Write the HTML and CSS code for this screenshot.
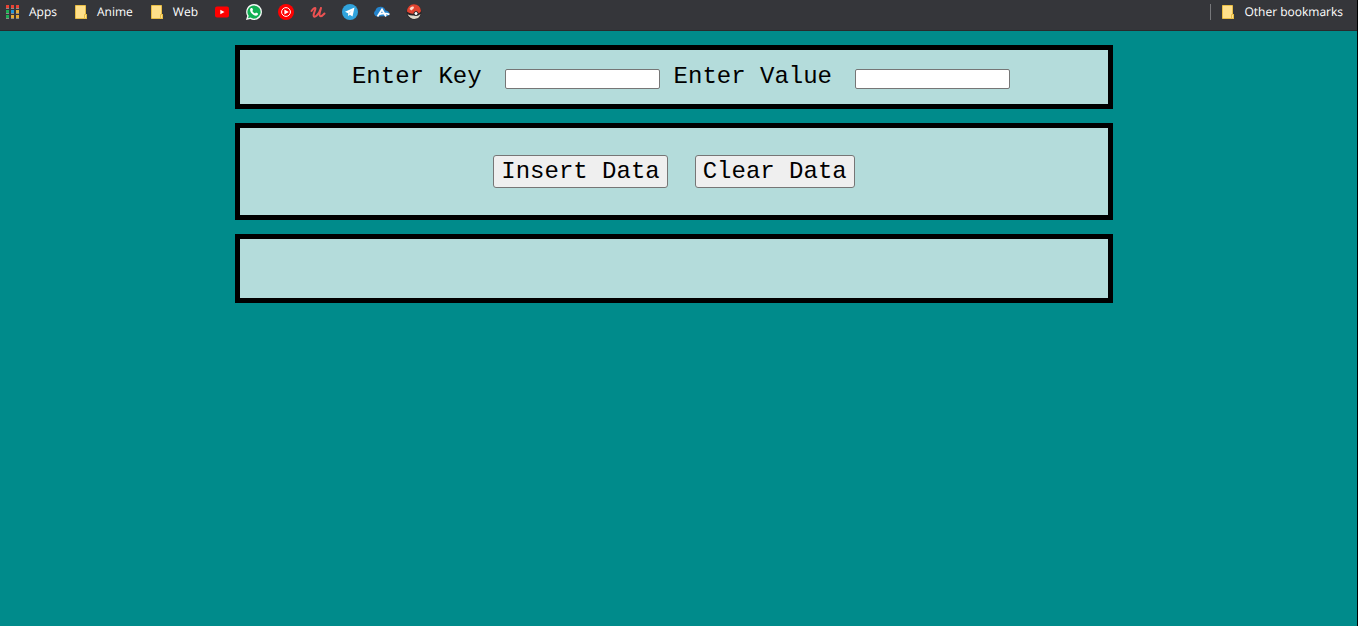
FILE: index.html
```html
<!DOCTYPE html>
<html lang="en">
<head>
<meta charset="utf-8">
<title>Local Storage</title>
<link rel="stylesheet" href="styles.css">
</head>
<body>
<svg class="defs" aria-hidden="true">
  <symbol id="folder" viewBox="0 0 16 16">
    <path d="M2.5 1.500h10v9h1v4h-11z" fill="#ffe08a" stroke="#e8bd45"/>
    <path d="M11.500 14.500v-4h2v4z" fill="#ffe08a" stroke="#e8bd45"/>
  </symbol>
</svg>
<nav class="bookmarks" aria-label="Bookmarks">
  <a class="bookmark" href="#"><svg class="icon" viewBox="0 0 16 16">
    <path fill="#ea4335" d="M1 1h3v3H1zM6 1h3v3H6zM11 1h3v3h-3z"/>
    <path fill="#1fae54" d="M1 6h3v3H1zM1 11h3v3H1z"/>
    <path fill="#2196d8" d="M6 6h3v3H6z"/>
    <path fill="#e5ac38" d="M11 6h3v3h-3zM6 11h3v3H6zM11 11h3v3h-3z"/>
    <path fill="#8d8d89" d="M1 4h3v1H1zM6 4h3v1H6zM11 4h3v1h-3zM1 9h3v1H1zM6 9h3v1H6zM11 9h3v1h-3zM1 14h3v1H1zM6 14h3v1H6zM11 14h3v1h-3z"/>
  </svg>Apps</a>
  <a class="bookmark" href="#"><svg class="icon"><use href="#folder"/></svg>Anime</a>
  <a class="bookmark" href="#"><svg class="icon"><use href="#folder"/></svg>Web</a>
  <a class="bookmark" href="#" aria-label="YouTube"><svg class="icon" viewBox="0 0 16 16">
    <rect x="1" y="2.500" width="14" height="11" rx="2" fill="#f00"/><path d="M6.300 5.700L10.500 8l-4.200 2.300z" fill="#fff"/>
  </svg></a>
  <a class="bookmark" href="#" aria-label="WhatsApp"><svg class="icon" viewBox="0 0 16 16">
    <path d="M8 0a8 8 0 0 1 0 16 8 8 0 0 1-3.800-1L0 16l1.200-4A8 8 0 0 1 8 0z" fill="#f4f7f5"/>
    <path d="M8 1.400a6.600 6.600 0 1 1-3.500 12.200L2 14.200l.7-2.400A6.600 6.600 0 0 1 8 1.400z" fill="#12af53"/>
    <path d="M5.200 4h1l.9 2-.8 1.100c.6 1.200 1.500 2 2.700 2.500l1-1.100 2 1v.8c-.3 1-1.200 1.500-2.200 1.400C6.800 11.300 4 8.200 4.100 5.600 4.100 4.900 4.600 4.300 5.200 4z" fill="#fff"/>
  </svg></a>
  <a class="bookmark" href="#" aria-label="YouTube Music"><svg class="icon" viewBox="0 0 16 16">
    <circle cx="8" cy="8" r="8" fill="#f00"/><circle cx="8" cy="8" r="4.400" fill="none" stroke="#fff"/><path d="M6.400 5.500L10.800 8l-4.400 2.500z" fill="#fff"/>
  </svg></a>
  <a class="bookmark" href="#" aria-label="Udemy"><svg class="icon" viewBox="0 0 16 16">
    <path d="M1.500 7C3 5 4.500 3.500 5.300 4c1 .8-2 5-1.700 7.500.4 2.800 4.800.6 7.400-7.500-1 3.500-2.200 7.200-1 8 1.200.7 3-.8 4.500-2.500" fill="none" stroke="#ec5252" stroke-width="2" stroke-linecap="round" stroke-linejoin="round"/>
  </svg></a>
  <a class="bookmark" href="#" aria-label="Telegram"><svg class="icon" viewBox="0 0 16 16">
    <circle cx="8" cy="8" r="8" fill="#30a3dc"/><path d="M3 7.800L12.500 3.500 10.500 12.500 7.800 10.800 6.300 12.300 6 9.200z" fill="#fff"/><path d="M6.300 9.300L10 6.200 7 10z" fill="#b9dcef"/>
  </svg></a>
  <a class="bookmark" href="#" aria-label="Cloud"><svg class="icon" viewBox="0 0 16 16">
    <path d="M3 12.500A3.300 3.300 0 0 1 1.500 6.500 4.500 4.500 0 0 1 5.500 3c3-.6 5.500 1 6 3.500 2 .1 3.700 1.300 4 3.300L14 12z" fill="#2484cc"/>
    <path d="M3.500 12.500L8 5.500l4 7M5.500 10.200c3.500-1.200 6.500-1.200 10 .3" fill="none" stroke="#fff" stroke-width="1.800"/>
  </svg></a>
  <a class="bookmark" href="#" aria-label="Pokeball"><svg class="icon" viewBox="0 0 16 16">
    <circle cx="8" cy="8" r="7.500" fill="#282426"/>
    <path d="M1 7.500a7 7 0 0 1 14-.5c-.8 2-2.200 2.700-4.500 2.700C6.500 10 3 9.500 1 7.500z" fill="#e2432f"/>
    <path d="M1.500 10.200c2 1.200 4 1.600 6.200 1.300 2.300.8 4.800.3 6.800-1.500C13.500 16 4.500 17 1.500 10.200z" fill="#ded8c9"/>
    <path d="M3.500 5c.8-2 2-2.500 4-2.500L8 4 5.500 6.500z" fill="#ffd9cb"/>
    <circle cx="10" cy="9.500" r="2" fill="#fff" stroke="#282426"/>
  </svg></a>
  <a class="bookmark other" href="#"><svg class="icon"><use href="#folder"/></svg>Other bookmarks</a>
</nav>
<main class="page">
  <form class="panel fields">
    <label class="field">Enter Key <input class="entry" type="text"></label>
    <label class="field">Enter Value <input class="entry" type="text"></label>
  </form>
  <section class="panel actions">
    <button class="action" type="button">Insert Data</button>
    <button class="action" type="button">Clear Data</button>
  </section>
  <section class="panel output" aria-label="Stored data"></section>
</main>
</body>
</html>
```
FILE: styles.css
```css
* {
  box-sizing: border-box;
}

body {
  margin: 0;
  min-height: 100vh;
  background: #008b8b;
  border-right: 1px solid #000;
}

.defs {
  position: absolute;
  width: 0;
  height: 0;
}

.bookmarks {
  display: flex;
  align-items: center;
  gap: 16px;
  padding: 4px 14px 10px 5px;
  background: #35363a;
  border-bottom: 1px solid #292a2d;
  font: 12px/16px "Open Sans", "Noto Sans", sans-serif;
  text-rendering: geometricPrecision;
}

.bookmark {
  display: flex;
  align-items: center;
  gap: 8px;
  color: #fff;
  text-decoration: none;
}

.icon {
  width: 16px;
  height: 16px;
}

.other {
  margin-left: auto;
  padding-left: 9px;
  border-left: 1px solid #77787b;
}

.page {
  display: flex;
  flex-direction: column;
  align-items: center;
  gap: 14px;
  padding: 14px 9px 14px 0;
  font-size: 24px;
  line-height: 27px;
}

.page,
.action {
  font-family: "Courier New", "Liberation Mono", monospace;
}

.panel {
  display: flex;
  justify-content: center;
  width: calc(65% + 2px);
  background: #b4dcdb;
  border: 5px solid #000;
}

.fields {
  gap: 14px;
  padding: 13px 0 14px 14px;
}

.field {
  display: flex;
  align-items: center;
  gap: 23px;
}

.entry {
  width: 155px;
  height: 20px;
  margin-top: 5px;
  padding: 1px 2px;
  background: #fff;
  border: 1px solid #767676;
  border-radius: 2px;
}

.actions {
  gap: 27px;
  padding: 27px 0;
}

.action {
  padding: 2px 7px;
  color: #000;
  background: #efefef;
  border: 1px solid #767676;
  border-radius: 3px;
  font-size: 24px;
  line-height: 27px;
}

.output {
  min-height: 69px;
}
```
